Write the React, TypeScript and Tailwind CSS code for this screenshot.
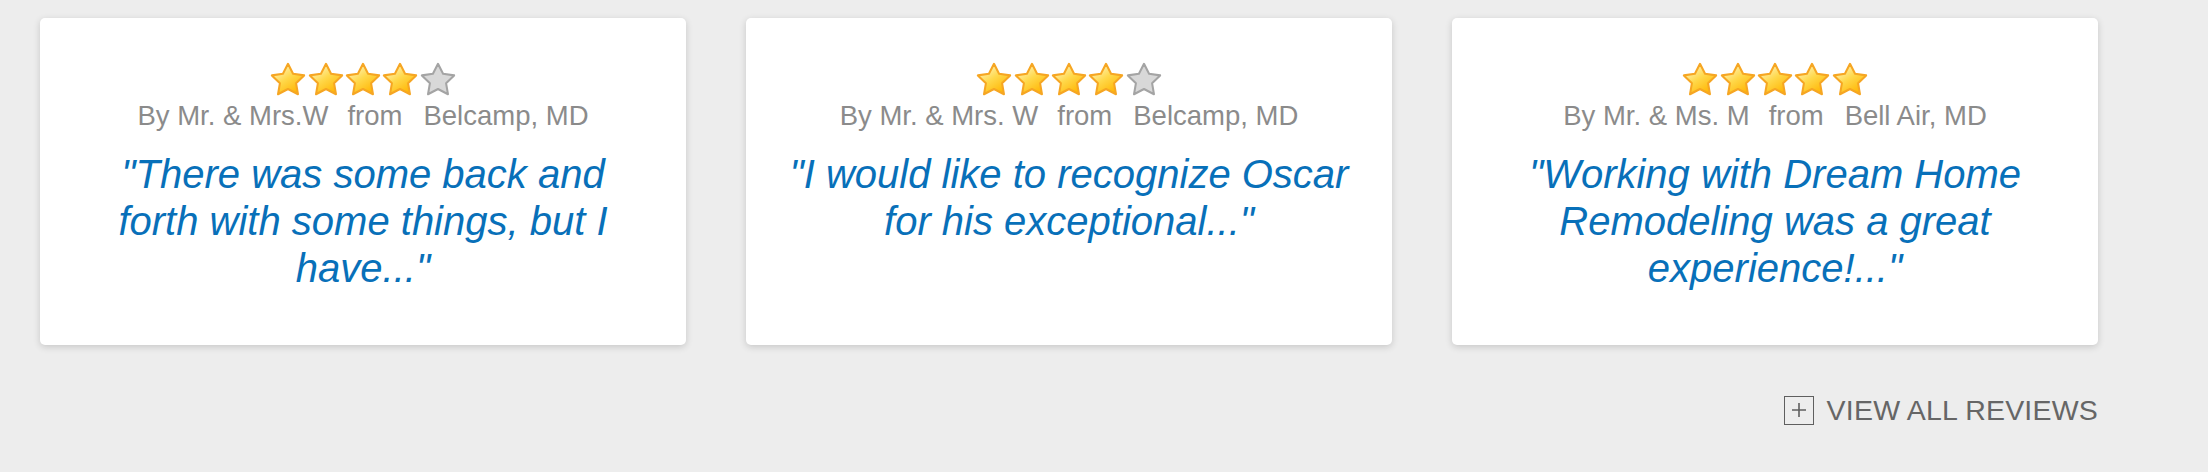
import React from "react";

type Review = {
  rating: number;
  author: string;
  place: string;
  lines: string[];
};

const reviews: Review[] = [
  {
    rating: 4,
    author: "By Mr. & Mrs.W",
    place: "Belcamp, MD",
    lines: ["\"There was some back and", "forth with some things, but I", "have...\""],
  },
  {
    rating: 4,
    author: "By Mr. & Mrs. W",
    place: "Belcamp, MD",
    lines: ["\"I would like to recognize Oscar", "for his exceptional...\""],
  },
  {
    rating: 5,
    author: "By Mr. & Ms. M",
    place: "Bell Air, MD",
    lines: ["\"Working with Dream Home", "Remodeling was a great", "experience!...\""],
  },
];

const Star = ({ on, id }: { on: boolean; id: string }) => (
  <svg width="38" height="37" viewBox="0 0 24 23" className="-mx-[0.3px]">
    <defs>
      <linearGradient id={id} x1="0.2" y1="0.1" x2="0.8" y2="0.95">
        <stop offset="0" stopColor="#fff3b8" />
        <stop offset="0.45" stopColor="#ffd84a" />
        <stop offset="1" stopColor="#ffb400" />
      </linearGradient>
    </defs>
    <polygon
      points="12,1.6 15.2,7.9 22.2,8.9 17.1,13.8 18.3,20.8 12,17.5 5.7,20.8 6.9,13.8 1.8,8.9 8.8,7.9"
      fill={on ? `url(#${id})` : "#d8d8d8"}
      stroke={on ? "#f6a623" : "#a4a4a4"}
      strokeWidth="1.3"
      strokeLinejoin="round"
    />
  </svg>
);

const ReviewCard = ({ review, idx }: { review: Review; idx: number }) => (
  <div className="w-[646px] h-[327px] bg-white rounded-[5px] shadow-[0_2px_7px_rgba(0,0,0,0.16)] flex flex-col items-center pt-[43px]">
    {/* Stars */}
    <div className="flex">
      {[0, 1, 2, 3, 4].map((i) => (
        <Star key={i} on={i < review.rating} id={`g${idx}-${i}`} />
      ))}
    </div>

    {/* Byline */}
    <p className="mt-[2px] text-[27.5px] leading-[32px] text-[#8b8b8b] whitespace-nowrap">
      {review.author}
      <span className="ml-[19px]">from</span>
      <span className="ml-[21px]">{review.place}</span>
    </p>

    {/* Quote */}
    <div className="mt-[19px] text-[40px] leading-[47px] italic text-[#0870b9] text-center">
      {review.lines.map((l, i) => (
        <div key={i} className="whitespace-nowrap">
          {l}
        </div>
      ))}
    </div>
  </div>
);

export default function App() {
  return (
    <div className="w-full h-[472px] bg-[#ededed] pt-[18px] pl-[40px] font-['Liberation_Sans',Arial,sans-serif]">
      <div className="w-[2058px]">
        <div className="flex gap-[60px]">
          {reviews.map((r, i) => (
            <ReviewCard key={i} review={r} idx={i} />
          ))}
        </div>

        {/* View all */}
        <div className="flex justify-end mt-[50px]">
          <a href="#" className="flex items-center gap-[13px] text-[#666666]">
            <span className="w-[30px] h-[29px] border-[1.5px] border-[#5f5f5f] flex items-center justify-center">
              <svg width="18" height="18" viewBox="0 0 18 18">
                <path d="M9 2v14M2 9h14" stroke="#5f5f5f" strokeWidth="1.6" />
              </svg>
            </span>
            <span className="text-[28.5px] leading-[30px] tracking-[0.2px]">VIEW ALL REVIEWS</span>
          </a>
        </div>
      </div>
    </div>
  );
}
